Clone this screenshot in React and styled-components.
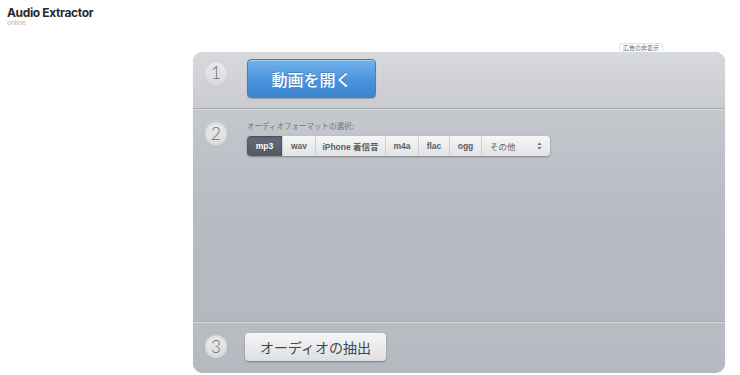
import React from "react";
import styled, { createGlobalStyle } from "styled-components";

const GlobalStyle = createGlobalStyle`
  body {
    margin: 0;
    background: #fff;
    font-family: "Inter", "Noto Sans CJK JP", sans-serif;
  }
`;

const Page = styled.div`
  width: 740px;
  height: 375px;
  overflow: hidden;
`;

const Header = styled.header`
  padding: 5px 7px 0;
  height: 20px;
`;

const Title = styled.h1`
  margin: 0;
  font-size: 12px;
  line-height: 15px;
  font-weight: 700;
  color: #2b2b2b;
  letter-spacing: -0.35px;
`;

const Sub = styled.div`
  font-size: 6.5px;
  line-height: 7px;
  color: #b0b0b0;
`;

const AdRow = styled.div`
  display: flex;
  justify-content: flex-end;
  width: 663px;
  margin-top: 18px;
  height: 9px;
`;

const AdLabel = styled.span`
  font-family: "Noto Sans CJK JP", sans-serif;
  font-size: 6px;
  line-height: 7px;
  height: 7px;
  padding: 0 3px;
  border: 1px solid #e2e2e2;
  border-bottom: none;
  border-radius: 3px 3px 0 0;
  color: #666;
`;

const Panel = styled.main`
  margin-left: 193px;
  width: 532px;
  height: 321px;
  border-radius: 10px;
  overflow: hidden;
  display: flex;
  flex-direction: column;
  background: #b6bbc2;
  box-shadow: 0 0 1px rgba(0, 0, 0, 0.15);
`;

const Step = styled.section`
  display: flex;
  align-items: flex-start;
  height: ${(p) => p.h}px;
  padding-top: ${(p) => p.pt}px;
  box-sizing: border-box;
  background: ${(p) => p.bg};
  border-top: ${(p) => (p.first ? "none" : "1px solid #a9adb4")};
  box-shadow: ${(p) => (p.first ? "none" : "inset 0 1px 0 #d3d5d9")};
`;

const Num = styled.div`
  flex: none;
  width: 22px;
  height: 22px;
  margin: ${(p) => p.mt}px ${(p) => p.mr}px 0 12px;
  border-radius: 50%;
  background: linear-gradient(#e9eaec, #dcdde0);
  box-shadow: inset 0 1px 2px rgba(0, 0, 0, 0.12), 0 1px 0 rgba(255, 255, 255, 0.5);
  display: flex;
  align-items: center;
  justify-content: center;
  font-family: "Lato", "Liberation Sans", sans-serif;
  font-size: 17px;
  font-weight: 300;
  line-height: 1;
  color: #6a6d73;
`;

const OpenButton = styled.button`
  width: 129px;
  height: 39px;
  border: 1px solid #3f7fc2;
  border-radius: 4px;
  background: linear-gradient(#72b3ea, #4a93dc 55%, #3b84d0);
  box-shadow: inset 0 1px 0 rgba(255, 255, 255, 0.35), 0 1px 1px rgba(0, 0, 0, 0.2);
  color: #fff;
  font-family: "Noto Sans CJK JP", sans-serif;
  font-size: 16px;
  font-weight: 500;
  text-shadow: 0 -1px 0 rgba(0, 0, 0, 0.2);
  padding: 0;
`;

const Content = styled.div`
  display: flex;
  flex-direction: column;
`;

const Label = styled.div`
  font-family: "Noto Sans CJK JP", sans-serif;
  font-size: 7.5px;
  line-height: 10px;
  color: #74777d;
  margin-bottom: 5px;
`;

const Segments = styled.div`
  display: flex;
  height: 20px;
  border-radius: 4px;
  background: linear-gradient(#f7f7f7, #e1e2e4);
  box-shadow: 0 1px 2px rgba(0, 0, 0, 0.35);
  overflow: hidden;
`;

const Seg = styled.div`
  flex: none;
  width: ${(p) => p.w}px;
  display: flex;
  align-items: center;
  justify-content: ${(p) => (p.select ? "space-between" : "center")};
  padding: ${(p) => (p.select ? "0 8px 0 8px" : "0")};
  box-sizing: border-box;
  border-left: ${(p) => (p.first ? "none" : "1px solid #cfd0d3")};
  font-family: "Liberation Sans", "Noto Sans CJK JP", sans-serif;
  font-size: 8.5px;
  font-weight: ${(p) => (p.select ? 400 : 700)};
  color: ${(p) => (p.active ? "#fff" : "#5b5d62")};
  background: ${(p) => (p.active ? "linear-gradient(#656b78, #525866)" : "transparent")};
  box-shadow: ${(p) => (p.active ? "inset 0 1px 2px rgba(0,0,0,0.35)" : "none")};
`;

const Arrows = styled.svg`
  width: 5px;
  height: 8px;
`;

const ExtractButton = styled.button`
  width: 141px;
  height: 28px;
  margin-left: ${(p) => p.ml}px;
  border: none;
  border-radius: 4px;
  background: linear-gradient(#f6f6f7, #dedfe2);
  box-shadow: 0 1px 2px rgba(0, 0, 0, 0.35);
  color: #45474c;
  font-family: "Noto Sans CJK JP", sans-serif;
  font-size: 14px;
  padding: 0;
`;

const formats = [
  { name: "mp3", w: 35, active: true },
  { name: "wav", w: 33 },
  { name: "iPhone 着信音", w: 70 },
  { name: "m4a", w: 33 },
  { name: "flac", w: 31 },
  { name: "ogg", w: 32 },
];

export default function App() {
  return (
    <Page>
      <GlobalStyle />
      <Header>
        <Title>Audio Extractor</Title>
        <Sub>online</Sub>
      </Header>
      <AdRow>
        <AdLabel>広告の非表示</AdLabel>
      </AdRow>
      <Panel>
        <Step first h={56} pt={7} bg="linear-gradient(#d8d9dc, #c9cbcf)">
          <Num mt={2} mr={20}>1</Num>
          <OpenButton>動画を開く</OpenButton>
        </Step>
        <Step h={213} pt={12} bg="linear-gradient(#c5c8cd, #b7bcc3 45%, #b4b9c0)">
          <Num mt={1} mr={20}>2</Num>
          <Content>
            <Label>オーディオフォーマットの選択:</Label>
            <Segments>
              {formats.map((f, i) => (
                <Seg key={f.name} w={f.w} active={f.active} first={i === 0}>
                  {f.name}
                </Seg>
              ))}
              <Seg w={69} select>
                <span>その他</span>
                <Arrows viewBox="0 0 5 8">
                  <path d="M2.5 0.5 L4.5 3 H0.5 Z M2.5 7.5 L4.5 5 H0.5 Z" fill="#6b6d72" />
                </Arrows>
              </Seg>
            </Segments>
          </Content>
        </Step>
        <Step h={52} pt={11} bg="linear-gradient(#b9bdc4, #b4b9c0)">
          <Num mt={2} mr={0}>3</Num>
          <ExtractButton ml={18}>オーディオの抽出</ExtractButton>
        </Step>
      </Panel>
    </Page>
  );
}
